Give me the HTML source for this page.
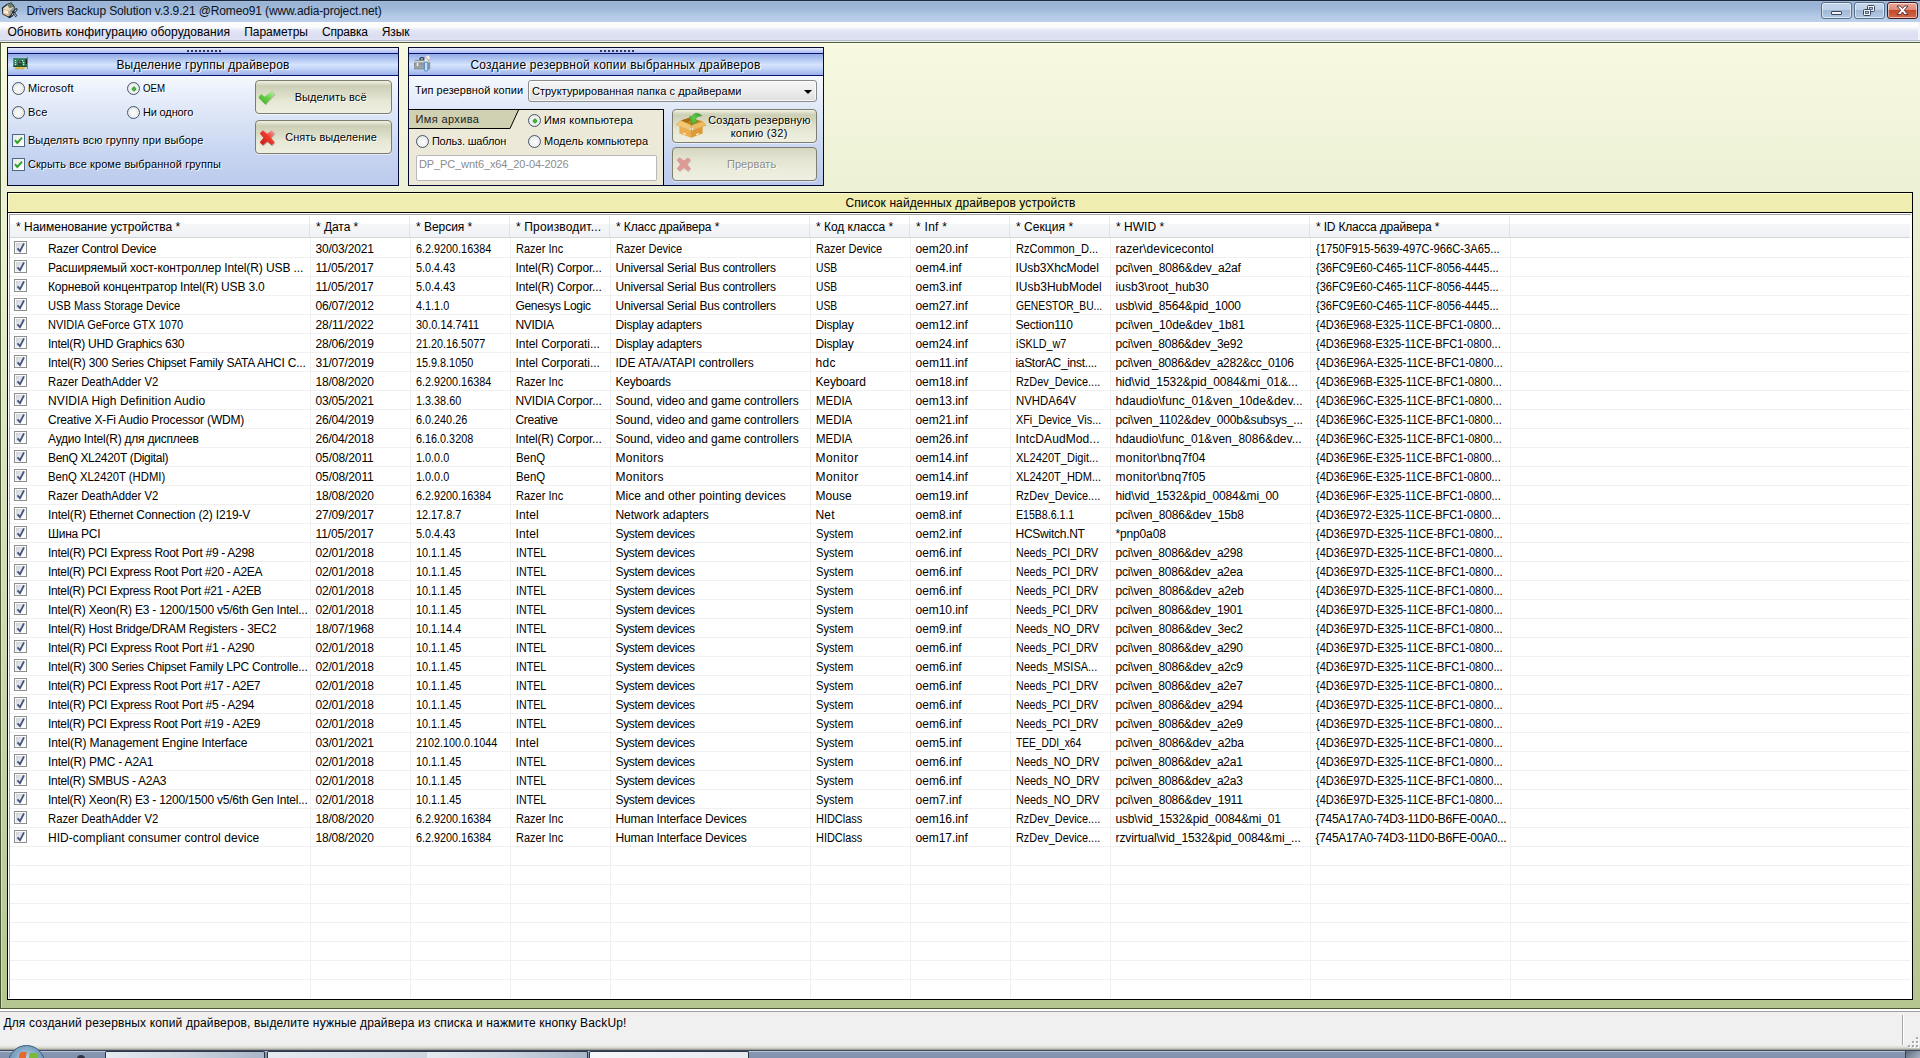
<!DOCTYPE html>
<html lang="ru"><head><meta charset="utf-8"><title>Drivers Backup Solution</title>
<style>
html,body{margin:0;padding:0}
body{width:1920px;height:1058px;overflow:hidden;position:relative;background:#f0f0f0;font-family:"Liberation Sans",sans-serif;font-size:12px;color:#000}
div{position:absolute;box-sizing:border-box}
.t{white-space:pre;font-size:12px}
.a{white-space:pre;text-shadow:1px 1px 0 #fff}
#title{left:0;top:0;width:1920px;height:22px;background:linear-gradient(#1c2a3f 0,#1c2a3f 1px,#a3b9d8 1px,#99b3d4 3px,#a2bbdb 10px,#b1c8e5 15px,#bdd0ea 22px)}
#menu{left:0;top:22px;width:1920px;height:18px;background:linear-gradient(#fdfdfe 0,#fbfbfd 5px,#eceef8 7px,#e2e5f4 9px,#dbdef0 14px,#dfe2f3 18px);border-right:2px solid #f4f5fb}
#menuline{left:0;top:40px;width:1920px;height:3px;background:linear-gradient(#b6bac6 0,#b6bac6 1px,#eaf0f0 1px,#eaf0f0 2px,#4b5a40 2px,#4b5a40 3px)}
#bodybg{left:0;top:43px;width:1920px;height:966px;background:linear-gradient(#f7f9e1,#b4c58f);border-left:1px solid #465631;box-shadow:inset 1px 0 0 rgba(255,255,255,.4),inset 0 1px 0 #fdffec}
.wb{top:2px;height:17px;width:31px;border:1px solid #5a6f8c;border-radius:3px;background:linear-gradient(#c3d6ec 0,#bdd0e7 45%,#a0b7d3 46%,#b5cae3 100%);box-shadow:inset 0 0 0 1px rgba(255,255,255,.55)}
.panel{border:1px solid #050a34;background:linear-gradient(#f4f8fe 0,#f4f8fe 29px,#e3ebf9 55px,#c8d5f1 105px,#bbcaed 100%)}
.pstrip{left:0;top:0;right:0;height:5px;background:linear-gradient(#e9effd 0,#c9d4f8 45%,#acb9f8 100%)}
.phead{left:0;right:0;top:5px;height:23px;border-top:1px solid #0c1668;border-bottom:1px solid #0c1668;background:linear-gradient(#93abe6 0,#b1c6f1 25%,#d5e3fc 50%,#c3d5f8 70%,#9bb1ea 100%)}
.grip{top:1px;height:2px;width:35px;background:repeating-linear-gradient(90deg,#30375e 0,#30375e 2px,transparent 2px,transparent 4px)}
.btn{border:1px solid #7d7e70;border-radius:4px;background:linear-gradient(#f3f3e6 0,#e2e3cf 2px,#cdceb5 5px,#d6d7c0 10px,#e6e7d5 20px,#eeefdf 32px);box-shadow:0 1px 0 rgba(255,255,255,.5)}
.radio{width:13px;height:13px;border-radius:50%;border:1px solid #44566e;background:radial-gradient(circle at 50% 55%,#fdfdfd 0,#f2f2f2 45%,#d8d8d8 100%)}
.radio.on::after{content:"";position:absolute;left:3.5px;top:3.5px;width:4px;height:4px;border-radius:1.2px;transform:rotate(45deg);background:radial-gradient(#5cc452,#23871f);box-shadow:0 0 1.5px #8fd888}
.chk{width:13px;height:13px;border:1px solid #4a6a8c;background:linear-gradient(135deg,#e8e8e4,#fff)}
#ltitle{left:7px;top:192px;width:1906px;height:21px;border:1px solid #000;background:#f0edb0;box-shadow:inset 1px 1px 0 #fcfcd2;text-align:center;line-height:19px;font-size:12px}
#list{left:7px;top:212px;width:1906px;height:788px;border:1px solid #000;background:#fff}
#lv{left:1px;top:1px;width:1902px;height:784px;border-left:1px solid #a5a5a5;border-top:1px solid #a5a5a5;overflow:hidden}
#lv>div{margin:-1px 0 0 -1px}
#hdr{left:1px;top:1px;width:1900px;height:23px;background:linear-gradient(#fff 0,#fff 40%,#f5f6f8 41%,#f1f2f5 100%);border-bottom:1px solid #d5d5d5}
.hs{top:2px;width:1px;height:21px;background:linear-gradient(#ededed,#dcdcdc)}
.vs{top:24px;width:1px;height:760px;background:#f0f0f0}
.rs{left:1px;width:1900px;height:1px;background:#f0f0f0}
.cb{left:5px;width:13px;height:13px;border:1px solid #8e8f8f;background:linear-gradient(135deg,#c4c9cf 0,#e4e6e9 45%,#fff 80%);box-shadow:inset 0 0 0 1px #fbfbfb}
.cb svg{position:absolute;left:-1px;top:-1px}
#status{left:0;top:1009px;width:1920px;height:41px;background:linear-gradient(#fff 0,#fff 2px,#a0a0a0 2px,#a0a0a0 3px,#f0f0f0 3px,#f0f0f0 36px,#d6d6ce 39px,#8e8e88 41px)}
#task{left:0;top:1050px;width:1920px;height:8px;background:linear-gradient(#3b475a 0,#3b475a 1px,#b5c5dc 1px,#b5c5dc 2px,#8797b2 2px,#8192ae 8px)}
.tb{top:1px;height:7px;border:1px solid #2e3644;border-bottom:0;border-radius:2px 2px 0 0;background:linear-gradient(90deg,#e6ebf1 0,#d3dae4 40%,#a9b6c9 100%)}

</style></head>
<body>
<div id="title">
<svg style="position:absolute;left:1px;top:2px" width="19" height="18" viewBox="1 2 19 18"><path d="M2.500 8L7 4.500 11 3l3 3.500V13l-4 4.500L3 14z" fill="#e9dcc6" stroke="#1e2b30" stroke-width="1.300"/><path d="M7 4.500L11 3l3 3.500-4.500 2z" fill="#6f7f6c"/><path d="M3 9l6.500 1.500V17L3 14z" fill="#d9b48f"/><path d="M4 10l4 1v3l-4-1z" fill="#f6efe4"/><path d="M9.500 10.500L14 7v6l-4.500 4.500z" fill="#8d9a8a"/><path d="M11 16.500L17 8.500" stroke="#1f2c3a" stroke-width="2.400"/><path d="M11.600 15.600L16.400 9.300" stroke="#dfe6ee" stroke-width=".9"/><path d="M12.500 11l4 5.500" stroke="#1f2c3a" stroke-width="2.200"/><path d="M14 13.200l2.200 3" stroke="#e8edf2" stroke-width=".9"/><path d="M8.500 17.500l3-2" stroke="#1f2c3a" stroke-width="1.600"/></svg>
<div class="t" id="ttl" style="left:26.4px;letter-spacing:-0.129px;top:2px;height:18px;line-height:18px;color:#0b1220">Drivers Backup Solution v.3.9.21 @Romeo91 (www.adia-project.net)</div>
<div class="wb" style="left:1821px"><div style="left:9px;top:8px;width:11px;height:4px;border:1px solid #37465c;border-radius:1px;background:#f2f4f7"></div></div>
<div class="wb" style="left:1854px"><svg style="position:absolute;left:8px;top:2px" width="13" height="12" viewBox="0 0 13 12"><rect x="4.5" y=".5" width="7" height="6" rx="1" fill="#f4f6f9" stroke="#37465c"/><rect x="6.5" y="2.5" width="3" height="2" fill="#b8c9df" stroke="#37465c" stroke-width=".8"/><rect x=".5" y="4.5" width="7" height="6" rx="1" fill="#f4f6f9" stroke="#37465c"/><rect x="2.5" y="6.5" width="3" height="2" fill="#b8c9df" stroke="#37465c" stroke-width=".8"/></svg></div>
<div class="wb" style="left:1887px;border-color:#431a1c;background:linear-gradient(#e9a99a 0,#dd8a78 45%,#c4472a 46%,#d2694b 100%)"><svg style="position:absolute;left:8px;top:2px" width="13" height="11" viewBox="1896 5 13 11"><path d="M1897 6h3.500l2 2.500 2-2.500h3.500l-3.700 4.300 3.700 4.300h-3.500l-2-2.600-2 2.600h-3.500l3.700-4.300z" fill="#fff" stroke="#4a2a28" stroke-width=".9" stroke-linejoin="round"/></svg></div>
</div>
<div id="menu">
<div class="t" id="m1" style="left:7.4px;letter-spacing:0.041px;top:1px;height:19px;line-height:19px">Обновить конфигурацию оборудования</div>
<div class="t" id="m2" style="left:244.2px;letter-spacing:-0.03px;top:1px;height:19px;line-height:19px">Параметры</div>
<div class="t" id="m3" style="left:322.1px;letter-spacing:-0.197px;top:1px;height:19px;line-height:19px">Справка</div>
<div class="t" id="m4" style="left:381.7px;letter-spacing:-0.062px;top:1px;height:19px;line-height:19px">Язык</div>
</div>
<div id="menuline"></div>
<div id="bodybg"></div>

<div class="panel" id="p1" style="left:7px;top:47px;width:392px;height:139px">
 <div class="pstrip"><div class="grip" style="left:179px;top:2px"></div></div>
 <div class="phead"></div>
 <svg style="position:absolute;left:5px;top:9px" width="16" height="14" viewBox="13 57 16 14"><rect x="13.300" y="58.200" width="13.700" height="8.600" fill="#2f7d5b"/><rect x="13.300" y="58.200" width="13.700" height="1" fill="#3c8a68"/><rect x="13.300" y="65.600" width="13.700" height="1.400" fill="#1f4d2c"/><rect x="18" y="61" width="4" height="4" fill="#2b3d35"/><rect x="18.500" y="61.600" width="3" height="1.600" fill="#66756c"/><g fill="#d7efe0"><rect x="15" y="60" width="1.200" height="1.200"/><rect x="15" y="62" width="1.200" height="1.200"/><rect x="15" y="64" width="1.200" height="1.200"/><rect x="22" y="60" width="1.200" height="1.200"/><rect x="23" y="62" width="1.200" height="1.200"/><rect x="23" y="64" width="1.200" height="1.200"/></g><rect x="25.600" y="59" width="1.400" height="5" fill="#16261d"/><rect x="27" y="57" width="1" height="12" fill="#5a6c8c" opacity=".8"/><rect x="15" y="67" width="10.500" height="1.600" fill="#e4c84a"/><rect x="15" y="68.400" width="9" height=".8" fill="#b99a2c"/></svg>
 <div class="a" style="left:108.4px;letter-spacing:0.181px;top:8px;height:18px;line-height:18px;font-size:12px">Выделение группы драйверов</div>
 <div class="radio" style="left:4px;top:34px"></div><div class="a" style="left:19.9px;letter-spacing:0.119px;top:32px;height:16px;line-height:16px;font-size:11px">Microsoft</div>
 <div class="radio on" style="left:119px;top:34px"></div><div class="a" style="left:134.9px;transform:scaleX(0.8818);transform-origin:0 50%;top:32px;height:16px;line-height:16px;font-size:11px">OEM</div>
 <div class="radio" style="left:4px;top:58px"></div><div class="a" style="left:19.9px;letter-spacing:0.244px;top:56px;height:16px;line-height:16px;font-size:11px">Все</div>
 <div class="radio" style="left:119px;top:58px"></div><div class="a" style="left:134.9px;letter-spacing:-0.137px;top:56px;height:16px;line-height:16px;font-size:11px">Ни одного</div>
 <div class="chk" style="left:4px;top:86px"><svg width="11" height="11" viewBox="0 0 11 11" style="position:absolute;left:0;top:0"><path d="M2 5.2L4.3 8 9 2.6" fill="none" stroke="#2ea22a" stroke-width="2"/></svg></div>
 <div class="a" style="left:19.9px;letter-spacing:0.13px;top:84px;height:16px;line-height:16px;font-size:11px">Выделять всю группу при выборе</div>
 <div class="chk" style="left:4px;top:110px"><svg width="11" height="11" viewBox="0 0 11 11" style="position:absolute;left:0;top:0"><path d="M2 5.2L4.3 8 9 2.6" fill="none" stroke="#2ea22a" stroke-width="2"/></svg></div>
 <div class="a" style="left:19.9px;letter-spacing:0.101px;top:108px;height:16px;line-height:16px;font-size:11px">Скрыть все кроме выбранной группы</div>
 <div class="btn" style="left:247px;top:32px;width:137px;height:34px">
  <svg style="position:absolute;left:2px;top:9px" width="18" height="16" viewBox="258 90 18 16"><defs><linearGradient id="gck" x1="0" y1="1" x2="1" y2="0"><stop offset="0" stop-color="#3fa92a"/><stop offset=".5" stop-color="#62cf45"/><stop offset="1" stop-color="#c4efb4"/></linearGradient></defs><path d="M259.200 98.300L262 95l3.400 2.800 6.600-6.600 3.500 3.400-9.600 10.600z" fill="#8c8f78" opacity=".55"/><path d="M258.400 97.400L261 94l3.700 2.800 6.900-5.800 3.100 3.300-9.400 10.300z" fill="url(#gck)"/></svg>
  <div class="a" style="left:38.7px;letter-spacing:0.063px;top:8px;height:16px;line-height:16px;font-size:11px">Выделить всё</div>
 </div>
 <div class="btn" style="left:247px;top:72px;width:137px;height:34px">
  <svg style="position:absolute;left:3px;top:8px" width="17" height="18" viewBox="259 129 17 18"><defs><linearGradient id="gx" x1="0" y1="1" x2="1" y2="0"><stop offset="0" stop-color="#c81414"/><stop offset=".55" stop-color="#ea3a2c"/><stop offset="1" stop-color="#f6b4b4"/></linearGradient></defs><path d="M262.800 130.200l4.500 3.600 4.400-3.600 3 3-3.700 4.500 3.700 4.500-3 3-4.400-3.700-4.500 3.700-3-3 3.700-4.500-3.700-4.500z" transform="translate(.6 1)" fill="#8e8e7c" opacity=".6"/><path d="M262.800 130.200l4.500 3.600 4.400-3.600 3 3-3.700 4.500 3.700 4.500-3 3-4.400-3.700-4.500 3.700-3-3 3.700-4.500-3.700-4.500z" fill="url(#gx)"/></svg>
  <div class="a" style="left:29.15px;letter-spacing:0.073px;top:8px;height:16px;line-height:16px;font-size:11px">Снять выделение</div>
 </div>
</div>

<div class="panel" id="p2" style="left:408px;top:47px;width:416px;height:139px">
 <div class="pstrip"><div class="grip" style="left:191px;top:2px"></div></div>
 <div class="phead"></div>
 <svg style="position:absolute;left:5px;top:7px" width="18" height="18" viewBox="414 55 18 18"><rect x="420" y="57.800" width="4" height="2.500" rx="1" fill="none" stroke="#1d2228" stroke-width="1.100"/><path d="M414.300 62l1.200-1.700h13l1.300 1.700v7h-15.500z" fill="#9aa1a6" stroke="#70787e" stroke-width=".6"/><rect x="414.300" y="61" width="15.500" height="1.300" fill="#d4d9dd"/><rect x="414.300" y="63.500" width="15.500" height=".8" fill="#7d858a"/><rect x="416.700" y="63" width="1.600" height="3" fill="#f2f2f2"/><path d="M424.300 62l1-5.500 3.700-1.200 1.200 3-3.600 4z" fill="#f1f1f1" stroke="#b9b9c2" stroke-width=".5"/><path d="M425.500 57.200l3 3" stroke="#c25a64" stroke-width=".7"/><rect x="424.300" y="62" width="3.600" height="9" rx="1.600" fill="#bfe0fa" stroke="#3f78b8" stroke-width=".9"/></svg>
 <div class="a" style="left:61.4px;letter-spacing:0.223px;top:8px;height:18px;line-height:18px;font-size:12px">Создание резервной копии выбранных драйверов</div>
 <div class="a" style="left:5.9px;letter-spacing:0.059px;top:34px;height:16px;line-height:16px;font-size:11px">Тип резервной копии</div>
 <div id="combo" style="left:119px;top:32px;width:289px;height:22px;border:1px solid #8b8b8b;border-radius:3px;background:linear-gradient(#f6f6f6 0,#ececec 50%,#dedede 100%);box-shadow:inset 0 0 0 1px rgba(255,255,255,.7)">
  <div class="a" style="left:2.9px;letter-spacing:0.076px;top:2px;height:16px;line-height:16px;font-size:11px">Структурированная папка с драйверами</div>
  <div style="right:4px;top:9px;width:0;height:0;border-left:4px solid transparent;border-right:4px solid transparent;border-top:4px solid #000"></div>
 </div>
 <div id="arch" style="left:0;top:61px;width:255px;height:76px;background:#ece9d8;border-top:1px solid #000;border-right:1px solid #000">
  <svg style="position:absolute;left:0;top:0" width="112" height="20" viewBox="0 0 112 20"><path d="M0 0H109.5L101 18.5H0z" fill="#d0d0b2"/><path d="M109.5 0L101 18.5H0" fill="none" stroke="#000" stroke-width="1"/></svg>
  <div class="t" style="left:6.4px;letter-spacing:0.387px;top:1px;height:16px;line-height:16px;font-size:11px;color:#1c1c1c">Имя архива</div>
  <div class="radio on" style="left:119px;top:4px"></div><div class="a" style="left:134.9px;letter-spacing:0.224px;top:2px;height:16px;line-height:16px;font-size:11px">Имя компьютера</div>
  <div class="radio" style="left:7px;top:25px"></div><div class="a" style="left:22.9px;letter-spacing:-0.183px;top:23px;height:16px;line-height:16px;font-size:11px">Польз. шаблон</div>
  <div class="radio" style="left:119px;top:25px"></div><div class="a" style="left:134.9px;letter-spacing:0.004px;top:23px;height:16px;line-height:16px;font-size:11px">Модель компьютера</div>
  <div style="left:7px;top:45px;width:241px;height:26px;border:1px solid #b9b9b9;border-radius:2px;background:#fff">
   <div class="t" style="left:1.9px;letter-spacing:-0.103px;top:0px;height:16px;line-height:16px;font-size:11px;color:#8c8c8c">DP_PC_wnt6_x64_20-04-2026</div>
  </div>
 </div>
 <div class="btn" style="left:263px;top:61px;width:145px;height:34px">
  <svg style="position:absolute;left:2px;top:2px" width="33" height="27" viewBox="675 112 33 27"><path d="M681 120.500L690 117.400 702.800 121.400 691.300 125.500z" fill="#c4841e"/><path d="M681 120.500L690 117.400 690 121 685 123z" fill="#a86c12"/><path d="M679.400 126.500L691.300 130.500V137.800L679.400 133.600z" fill="#eaae50"/><path d="M691.300 130.500L702.600 126.500V133.500L691.300 137.800z" fill="#dc9a3a"/><path d="M676.200 124.600L681 120.500 691.300 125.500 688.400 129.800z" fill="#f4c873" stroke="#d39a3c" stroke-width=".5"/><path d="M691.300 125.500L702.800 121.400 706 125.400 694.500 129.400z" fill="#f0bc62" stroke="#d39a3c" stroke-width=".5"/><path d="M683 132.500l3 1v1.600l-3-1zM696 134l3-1.100v1.600l-3 1.100z" fill="#fce6b0"/><path d="M691.300 125.500V137.800" stroke="#c98b2c" stroke-width=".6"/><defs><linearGradient id="gar" x1="1" y1="0" x2="0" y2="1"><stop offset="0" stop-color="#2f9a2a"/><stop offset=".5" stop-color="#5ecb45"/><stop offset="1" stop-color="#3ead30"/></linearGradient></defs><path d="M701.800 115.800C698.500 112.200 693.500 112.400 692.200 116.600L689.800 116 691.600 124.500 697.400 121.600 695.400 120C695.800 117.600 698 116 701.800 115.800z" fill="url(#gar)" stroke="#2c8a28" stroke-width=".4"/></svg>
  <div class="a" style="left:35.15px;letter-spacing:0.163px;top:4px;height:13px;line-height:13px;font-size:11px">Создать резервную</div>
  <div class="a" style="left:57.65px;letter-spacing:0.292px;top:17px;height:13px;line-height:13px;font-size:11px">копию (32)</div>
 </div>
 <div class="btn" style="left:263px;top:99px;width:145px;height:34px;background:linear-gradient(#d6d7c2 0,#e1e2cf 30%,#ebecdb 70%,#eeefe0 100%)">
  <svg style="position:absolute;left:3px;top:8px" width="16" height="17" viewBox="259 129 17 18"><path d="M262.800 130.200l4.500 3.600 4.400-3.600 3 3-3.700 4.500 3.700 4.500-3 3-4.400-3.700-4.500 3.700-3-3 3.700-4.500-3.700-4.500z" transform="translate(.6 1)" fill="#b9b9a8" opacity=".6"/><path d="M262.800 130.200l4.500 3.600 4.400-3.600 3 3-3.700 4.500 3.700 4.500-3 3-4.400-3.700-4.500 3.700-3-3 3.700-4.500-3.700-4.500z" fill="#dd9a96"/></svg>
  <div class="a" style="left:53.9px;letter-spacing:0.103px;top:8px;height:16px;line-height:16px;font-size:11px;color:#8d8d85">Прервать</div>
 </div>
</div>

<div id="ltitle"><div class="t" style="left:837.4px;letter-spacing:0.104px;top:1px;height:19px;line-height:19px">Список найденных драйверов устройств</div></div>
<div id="list">
<div id="lv">
<div id="hdr"></div>
<div class="t" style="left:7px;top:2px;height:22px;line-height:22px;letter-spacing:-0.006px">* Наименование устройства *</div>
<div class="t" style="left:307px;top:2px;height:22px;line-height:22px;letter-spacing:-0.049px">* Дата *</div>
<div class="t" style="left:407px;top:2px;height:22px;line-height:22px;letter-spacing:-0.036px">* Версия *</div>
<div class="t" style="left:507px;top:2px;height:22px;line-height:22px;letter-spacing:0.165px">* Производит...</div>
<div class="t" style="left:607px;top:2px;height:22px;line-height:22px;letter-spacing:-0.118px">* Класс драйвера *</div>
<div class="t" style="left:807px;top:2px;height:22px;line-height:22px;letter-spacing:-0.02px">* Код класса *</div>
<div class="t" style="left:907px;top:2px;height:22px;line-height:22px;letter-spacing:0.263px">* Inf *</div>
<div class="t" style="left:1007px;top:2px;height:22px;line-height:22px;letter-spacing:0.053px">* Секция *</div>
<div class="t" style="left:1107px;top:2px;height:22px;line-height:22px;letter-spacing:0.025px">* HWID *</div>
<div class="t" style="left:1307px;top:2px;height:22px;line-height:22px;letter-spacing:-0.188px">* ID Класса драйвера *</div>
<div class="hs" style="left:300px"></div><div class="hs" style="left:400px"></div><div class="hs" style="left:500px"></div><div class="hs" style="left:600px"></div><div class="hs" style="left:800px"></div><div class="hs" style="left:900px"></div><div class="hs" style="left:1000px"></div><div class="hs" style="left:1100px"></div><div class="hs" style="left:1300px"></div><div class="hs" style="left:1500px"></div>
<div class="vs" style="left:301px"></div><div class="vs" style="left:401px"></div><div class="vs" style="left:501px"></div><div class="vs" style="left:601px"></div><div class="vs" style="left:801px"></div><div class="vs" style="left:901px"></div><div class="vs" style="left:1001px"></div><div class="vs" style="left:1101px"></div><div class="vs" style="left:1301px"></div><div class="vs" style="left:1501px"></div>
<div class="rs" style="top:43px"></div><div class="rs" style="top:62px"></div><div class="rs" style="top:81px"></div><div class="rs" style="top:100px"></div><div class="rs" style="top:119px"></div><div class="rs" style="top:138px"></div><div class="rs" style="top:157px"></div><div class="rs" style="top:176px"></div><div class="rs" style="top:195px"></div><div class="rs" style="top:214px"></div><div class="rs" style="top:233px"></div><div class="rs" style="top:252px"></div><div class="rs" style="top:271px"></div><div class="rs" style="top:290px"></div><div class="rs" style="top:309px"></div><div class="rs" style="top:328px"></div><div class="rs" style="top:347px"></div><div class="rs" style="top:366px"></div><div class="rs" style="top:385px"></div><div class="rs" style="top:404px"></div><div class="rs" style="top:423px"></div><div class="rs" style="top:442px"></div><div class="rs" style="top:461px"></div><div class="rs" style="top:480px"></div><div class="rs" style="top:499px"></div><div class="rs" style="top:518px"></div><div class="rs" style="top:537px"></div><div class="rs" style="top:556px"></div><div class="rs" style="top:575px"></div><div class="rs" style="top:594px"></div><div class="rs" style="top:613px"></div><div class="rs" style="top:632px"></div><div class="rs" style="top:651px"></div><div class="rs" style="top:670px"></div><div class="rs" style="top:689px"></div><div class="rs" style="top:708px"></div><div class="rs" style="top:727px"></div><div class="rs" style="top:746px"></div><div class="rs" style="top:765px"></div>
<div class="cb" style="top:27px"><svg width="13" height="13" viewBox="0 0 13 13"><path d="M3.5 7.3L6 10.2 10 2.4" fill="none" stroke="#42527f" stroke-width="1.8"/></svg></div><div class="t" style="left:39px;top:26px;height:19px;line-height:19px;letter-spacing:-0.292px">Razer Control Device</div><div class="t" style="left:306.5px;top:26px;height:19px;line-height:19px;letter-spacing:-0.186px">30/03/2021</div><div class="t" style="left:406.5px;top:26px;height:19px;line-height:19px;transform:scaleX(0.9014);transform-origin:0 50%">6.2.9200.16384</div><div class="t" style="left:506.5px;top:26px;height:19px;line-height:19px;transform:scaleX(0.919);transform-origin:0 50%">Razer Inc</div><div class="t" style="left:606.5px;top:26px;height:19px;line-height:19px;transform:scaleX(0.919);transform-origin:0 50%">Razer Device</div><div class="t" style="left:806.5px;top:26px;height:19px;line-height:19px;transform:scaleX(0.919);transform-origin:0 50%">Razer Device</div><div class="t" style="left:906.5px;top:26px;height:19px;line-height:19px;letter-spacing:-0.056px">oem20.inf</div><div class="t" style="left:1006.5px;top:26px;height:19px;line-height:19px;transform:scaleX(0.9268);transform-origin:0 50%">RzCommon_D...</div><div class="t" style="left:1106.5px;top:26px;height:19px;line-height:19px;letter-spacing:0.045px">razer\devicecontol</div><div class="t" style="left:1306.5px;top:26px;height:19px;line-height:19px;transform:scaleX(0.9366);transform-origin:0 50%">{1750F915-5639-497C-966C-3A65...</div>
<div class="cb" style="top:46px"><svg width="13" height="13" viewBox="0 0 13 13"><path d="M3.5 7.3L6 10.2 10 2.4" fill="none" stroke="#42527f" stroke-width="1.8"/></svg></div><div class="t" style="left:39px;top:45px;height:19px;line-height:19px;letter-spacing:-0.107px">Расширяемый хост-контроллер Intel(R) USB ...</div><div class="t" style="left:306.5px;top:45px;height:19px;line-height:19px;letter-spacing:-0.097px">11/05/2017</div><div class="t" style="left:406.5px;top:45px;height:19px;line-height:19px;transform:scaleX(0.9037);transform-origin:0 50%">5.0.4.43</div><div class="t" style="left:506.5px;top:45px;height:19px;line-height:19px;letter-spacing:-0.139px">Intel(R) Corpor...</div><div class="t" style="left:606.5px;top:45px;height:19px;line-height:19px;letter-spacing:-0.204px">Universal Serial Bus controllers</div><div class="t" style="left:806.5px;top:45px;height:19px;line-height:19px;transform:scaleX(0.8587);transform-origin:0 50%">USB</div><div class="t" style="left:906.5px;top:45px;height:19px;line-height:19px;letter-spacing:0.021px">oem4.inf</div><div class="t" style="left:1006.5px;top:45px;height:19px;line-height:19px;letter-spacing:-0.117px">IUsb3XhcModel</div><div class="t" style="left:1106.5px;top:45px;height:19px;line-height:19px;letter-spacing:-0.171px">pci\ven_8086&amp;dev_a2af</div><div class="t" style="left:1306.5px;top:45px;height:19px;line-height:19px;transform:scaleX(0.9232);transform-origin:0 50%">{36FC9E60-C465-11CF-8056-4445...</div>
<div class="cb" style="top:65px"><svg width="13" height="13" viewBox="0 0 13 13"><path d="M3.5 7.3L6 10.2 10 2.4" fill="none" stroke="#42527f" stroke-width="1.8"/></svg></div><div class="t" style="left:39px;top:64px;height:19px;line-height:19px;letter-spacing:-0.177px">Корневой концентратор Intel(R) USB 3.0</div><div class="t" style="left:306.5px;top:64px;height:19px;line-height:19px;letter-spacing:-0.097px">11/05/2017</div><div class="t" style="left:406.5px;top:64px;height:19px;line-height:19px;transform:scaleX(0.9037);transform-origin:0 50%">5.0.4.43</div><div class="t" style="left:506.5px;top:64px;height:19px;line-height:19px;letter-spacing:-0.139px">Intel(R) Corpor...</div><div class="t" style="left:606.5px;top:64px;height:19px;line-height:19px;letter-spacing:-0.204px">Universal Serial Bus controllers</div><div class="t" style="left:806.5px;top:64px;height:19px;line-height:19px;transform:scaleX(0.8587);transform-origin:0 50%">USB</div><div class="t" style="left:906.5px;top:64px;height:19px;line-height:19px;letter-spacing:0.021px">oem3.inf</div><div class="t" style="left:1006.5px;top:64px;height:19px;line-height:19px;letter-spacing:0.012px">IUsb3HubModel</div><div class="t" style="left:1106.5px;top:64px;height:19px;line-height:19px;letter-spacing:0.028px">iusb3\root_hub30</div><div class="t" style="left:1306.5px;top:64px;height:19px;line-height:19px;transform:scaleX(0.9232);transform-origin:0 50%">{36FC9E60-C465-11CF-8056-4445...</div>
<div class="cb" style="top:84px"><svg width="13" height="13" viewBox="0 0 13 13"><path d="M3.5 7.3L6 10.2 10 2.4" fill="none" stroke="#42527f" stroke-width="1.8"/></svg></div><div class="t" style="left:39px;top:83px;height:19px;line-height:19px;transform:scaleX(0.9306);transform-origin:0 50%">USB Mass Storage Device</div><div class="t" style="left:306.5px;top:83px;height:19px;line-height:19px;letter-spacing:-0.186px">06/07/2012</div><div class="t" style="left:406.5px;top:83px;height:19px;line-height:19px;transform:scaleX(0.9046);transform-origin:0 50%">4.1.1.0</div><div class="t" style="left:506.5px;top:83px;height:19px;line-height:19px;letter-spacing:-0.322px">Genesys Logic</div><div class="t" style="left:606.5px;top:83px;height:19px;line-height:19px;letter-spacing:-0.204px">Universal Serial Bus controllers</div><div class="t" style="left:806.5px;top:83px;height:19px;line-height:19px;transform:scaleX(0.8587);transform-origin:0 50%">USB</div><div class="t" style="left:906.5px;top:83px;height:19px;line-height:19px;letter-spacing:-0.056px">oem27.inf</div><div class="t" style="left:1006.5px;top:83px;height:19px;line-height:19px;transform:scaleX(0.8578);transform-origin:0 50%">GENESTOR_BU...</div><div class="t" style="left:1106.5px;top:83px;height:19px;line-height:19px;letter-spacing:-0.171px">usb\vid_8564&amp;pid_1000</div><div class="t" style="left:1306.5px;top:83px;height:19px;line-height:19px;transform:scaleX(0.9232);transform-origin:0 50%">{36FC9E60-C465-11CF-8056-4445...</div>
<div class="cb" style="top:103px"><svg width="13" height="13" viewBox="0 0 13 13"><path d="M3.5 7.3L6 10.2 10 2.4" fill="none" stroke="#42527f" stroke-width="1.8"/></svg></div><div class="t" style="left:39px;top:102px;height:19px;line-height:19px;transform:scaleX(0.9172);transform-origin:0 50%">NVIDIA GeForce GTX 1070</div><div class="t" style="left:306.5px;top:102px;height:19px;line-height:19px;letter-spacing:-0.097px">28/11/2022</div><div class="t" style="left:406.5px;top:102px;height:19px;line-height:19px;transform:scaleX(0.9135);transform-origin:0 50%">30.0.14.7411</div><div class="t" style="left:506.5px;top:102px;height:19px;line-height:19px;letter-spacing:-0.303px">NVIDIA</div><div class="t" style="left:606.5px;top:102px;height:19px;line-height:19px;letter-spacing:-0.199px">Display adapters</div><div class="t" style="left:806.5px;top:102px;height:19px;line-height:19px;letter-spacing:-0.166px">Display</div><div class="t" style="left:906.5px;top:102px;height:19px;line-height:19px;letter-spacing:-0.056px">oem12.inf</div><div class="t" style="left:1006.5px;top:102px;height:19px;line-height:19px;letter-spacing:-0.196px">Section110</div><div class="t" style="left:1106.5px;top:102px;height:19px;line-height:19px;letter-spacing:-0.139px">pci\ven_10de&amp;dev_1b81</div><div class="t" style="left:1306.5px;top:102px;height:19px;line-height:19px;transform:scaleX(0.9178);transform-origin:0 50%">{4D36E968-E325-11CE-BFC1-0800...</div>
<div class="cb" style="top:122px"><svg width="13" height="13" viewBox="0 0 13 13"><path d="M3.5 7.3L6 10.2 10 2.4" fill="none" stroke="#42527f" stroke-width="1.8"/></svg></div><div class="t" style="left:39px;top:121px;height:19px;line-height:19px;letter-spacing:-0.288px">Intel(R) UHD Graphics 630</div><div class="t" style="left:306.5px;top:121px;height:19px;line-height:19px;letter-spacing:-0.186px">28/06/2019</div><div class="t" style="left:406.5px;top:121px;height:19px;line-height:19px;transform:scaleX(0.9016);transform-origin:0 50%">21.20.16.5077</div><div class="t" style="left:506.5px;top:121px;height:19px;line-height:19px;letter-spacing:-0.065px">Intel Corporati...</div><div class="t" style="left:606.5px;top:121px;height:19px;line-height:19px;letter-spacing:-0.199px">Display adapters</div><div class="t" style="left:806.5px;top:121px;height:19px;line-height:19px;letter-spacing:-0.166px">Display</div><div class="t" style="left:906.5px;top:121px;height:19px;line-height:19px;letter-spacing:-0.056px">oem24.inf</div><div class="t" style="left:1006.5px;top:121px;height:19px;line-height:19px;transform:scaleX(0.8959);transform-origin:0 50%">iSKLD_w7</div><div class="t" style="left:1106.5px;top:121px;height:19px;line-height:19px;letter-spacing:-0.235px">pci\ven_8086&amp;dev_3e92</div><div class="t" style="left:1306.5px;top:121px;height:19px;line-height:19px;transform:scaleX(0.9178);transform-origin:0 50%">{4D36E968-E325-11CE-BFC1-0800...</div>
<div class="cb" style="top:141px"><svg width="13" height="13" viewBox="0 0 13 13"><path d="M3.5 7.3L6 10.2 10 2.4" fill="none" stroke="#42527f" stroke-width="1.8"/></svg></div><div class="t" style="left:39px;top:140px;height:19px;line-height:19px;letter-spacing:-0.219px">Intel(R) 300 Series Chipset Family SATA AHCI C...</div><div class="t" style="left:306.5px;top:140px;height:19px;line-height:19px;letter-spacing:-0.186px">31/07/2019</div><div class="t" style="left:406.5px;top:140px;height:19px;line-height:19px;transform:scaleX(0.9021);transform-origin:0 50%">15.9.8.1050</div><div class="t" style="left:506.5px;top:140px;height:19px;line-height:19px;letter-spacing:-0.065px">Intel Corporati...</div><div class="t" style="left:606.5px;top:140px;height:19px;line-height:19px;letter-spacing:-0.038px">IDE ATA/ATAPI controllers</div><div class="t" style="left:806.5px;top:140px;height:19px;line-height:19px;letter-spacing:0.28px">hdc</div><div class="t" style="left:906.5px;top:140px;height:19px;line-height:19px;letter-spacing:0.043px">oem11.inf</div><div class="t" style="left:1006.5px;top:140px;height:19px;line-height:19px;letter-spacing:-0.324px">iaStorAC_inst....</div><div class="t" style="left:1106.5px;top:140px;height:19px;line-height:19px;letter-spacing:-0.251px">pci\ven_8086&amp;dev_a282&amp;cc_0106</div><div class="t" style="left:1306.5px;top:140px;height:19px;line-height:19px;transform:scaleX(0.9217);transform-origin:0 50%">{4D36E96A-E325-11CE-BFC1-0800...</div>
<div class="cb" style="top:160px"><svg width="13" height="13" viewBox="0 0 13 13"><path d="M3.5 7.3L6 10.2 10 2.4" fill="none" stroke="#42527f" stroke-width="1.8"/></svg></div><div class="t" style="left:39px;top:159px;height:19px;line-height:19px;transform:scaleX(0.9386);transform-origin:0 50%">Razer DeathAdder V2</div><div class="t" style="left:306.5px;top:159px;height:19px;line-height:19px;letter-spacing:-0.186px">18/08/2020</div><div class="t" style="left:406.5px;top:159px;height:19px;line-height:19px;transform:scaleX(0.9014);transform-origin:0 50%">6.2.9200.16384</div><div class="t" style="left:506.5px;top:159px;height:19px;line-height:19px;transform:scaleX(0.919);transform-origin:0 50%">Razer Inc</div><div class="t" style="left:606.5px;top:159px;height:19px;line-height:19px;letter-spacing:-0.242px">Keyboards</div><div class="t" style="left:806.5px;top:159px;height:19px;line-height:19px;letter-spacing:-0.147px">Keyboard</div><div class="t" style="left:906.5px;top:159px;height:19px;line-height:19px;letter-spacing:-0.056px">oem18.inf</div><div class="t" style="left:1006.5px;top:159px;height:19px;line-height:19px;transform:scaleX(0.9083);transform-origin:0 50%">RzDev_Device....</div><div class="t" style="left:1106.5px;top:159px;height:19px;line-height:19px;letter-spacing:-0.063px">hid\vid_1532&amp;pid_0084&amp;mi_01&amp;...</div><div class="t" style="left:1306.5px;top:159px;height:19px;line-height:19px;transform:scaleX(0.9168);transform-origin:0 50%">{4D36E96B-E325-11CE-BFC1-0800...</div>
<div class="cb" style="top:179px"><svg width="13" height="13" viewBox="0 0 13 13"><path d="M3.5 7.3L6 10.2 10 2.4" fill="none" stroke="#42527f" stroke-width="1.8"/></svg></div><div class="t" style="left:39px;top:178px;height:19px;line-height:19px;letter-spacing:0.111px">NVIDIA High Definition Audio</div><div class="t" style="left:306.5px;top:178px;height:19px;line-height:19px;letter-spacing:-0.186px">03/05/2021</div><div class="t" style="left:406.5px;top:178px;height:19px;line-height:19px;transform:scaleX(0.9032);transform-origin:0 50%">1.3.38.60</div><div class="t" style="left:506.5px;top:178px;height:19px;line-height:19px;letter-spacing:-0.156px">NVIDIA Corpor...</div><div class="t" style="left:606.5px;top:178px;height:19px;line-height:19px;letter-spacing:-0.068px">Sound, video and game controllers</div><div class="t" style="left:806.5px;top:178px;height:19px;line-height:19px;transform:scaleX(0.9522);transform-origin:0 50%">MEDIA</div><div class="t" style="left:906.5px;top:178px;height:19px;line-height:19px;letter-spacing:-0.056px">oem13.inf</div><div class="t" style="left:1006.5px;top:178px;height:19px;line-height:19px;transform:scaleX(0.9501);transform-origin:0 50%">NVHDA64V</div><div class="t" style="left:1106.5px;top:178px;height:19px;line-height:19px;letter-spacing:0.041px">hdaudio\func_01&amp;ven_10de&amp;dev...</div><div class="t" style="left:1306.5px;top:178px;height:19px;line-height:19px;transform:scaleX(0.9137);transform-origin:0 50%">{4D36E96C-E325-11CE-BFC1-0800...</div>
<div class="cb" style="top:198px"><svg width="13" height="13" viewBox="0 0 13 13"><path d="M3.5 7.3L6 10.2 10 2.4" fill="none" stroke="#42527f" stroke-width="1.8"/></svg></div><div class="t" style="left:39px;top:197px;height:19px;line-height:19px;letter-spacing:-0.167px">Creative X-Fi Audio Processor (WDM)</div><div class="t" style="left:306.5px;top:197px;height:19px;line-height:19px;letter-spacing:-0.186px">26/04/2019</div><div class="t" style="left:406.5px;top:197px;height:19px;line-height:19px;transform:scaleX(0.9027);transform-origin:0 50%">6.0.240.26</div><div class="t" style="left:506.5px;top:197px;height:19px;line-height:19px;letter-spacing:-0.311px">Creative</div><div class="t" style="left:606.5px;top:197px;height:19px;line-height:19px;letter-spacing:-0.068px">Sound, video and game controllers</div><div class="t" style="left:806.5px;top:197px;height:19px;line-height:19px;transform:scaleX(0.9522);transform-origin:0 50%">MEDIA</div><div class="t" style="left:906.5px;top:197px;height:19px;line-height:19px;letter-spacing:-0.056px">oem21.inf</div><div class="t" style="left:1006.5px;top:197px;height:19px;line-height:19px;transform:scaleX(0.9017);transform-origin:0 50%">XFi_Device_Vis...</div><div class="t" style="left:1106.5px;top:197px;height:19px;line-height:19px;letter-spacing:-0.189px">pci\ven_1102&amp;dev_000b&amp;subsys_...</div><div class="t" style="left:1306.5px;top:197px;height:19px;line-height:19px;transform:scaleX(0.9137);transform-origin:0 50%">{4D36E96C-E325-11CE-BFC1-0800...</div>
<div class="cb" style="top:217px"><svg width="13" height="13" viewBox="0 0 13 13"><path d="M3.5 7.3L6 10.2 10 2.4" fill="none" stroke="#42527f" stroke-width="1.8"/></svg></div><div class="t" style="left:39px;top:216px;height:19px;line-height:19px;letter-spacing:-0.223px">Аудио Intel(R) для дисплеев</div><div class="t" style="left:306.5px;top:216px;height:19px;line-height:19px;letter-spacing:-0.186px">26/04/2018</div><div class="t" style="left:406.5px;top:216px;height:19px;line-height:19px;transform:scaleX(0.9021);transform-origin:0 50%">6.16.0.3208</div><div class="t" style="left:506.5px;top:216px;height:19px;line-height:19px;letter-spacing:-0.139px">Intel(R) Corpor...</div><div class="t" style="left:606.5px;top:216px;height:19px;line-height:19px;letter-spacing:-0.068px">Sound, video and game controllers</div><div class="t" style="left:806.5px;top:216px;height:19px;line-height:19px;transform:scaleX(0.9522);transform-origin:0 50%">MEDIA</div><div class="t" style="left:906.5px;top:216px;height:19px;line-height:19px;letter-spacing:-0.056px">oem26.inf</div><div class="t" style="left:1006.5px;top:216px;height:19px;line-height:19px;letter-spacing:0.106px">IntcDAudMod...</div><div class="t" style="left:1106.5px;top:216px;height:19px;line-height:19px;letter-spacing:0.008px">hdaudio\func_01&amp;ven_8086&amp;dev...</div><div class="t" style="left:1306.5px;top:216px;height:19px;line-height:19px;transform:scaleX(0.9137);transform-origin:0 50%">{4D36E96C-E325-11CE-BFC1-0800...</div>
<div class="cb" style="top:236px"><svg width="13" height="13" viewBox="0 0 13 13"><path d="M3.5 7.3L6 10.2 10 2.4" fill="none" stroke="#42527f" stroke-width="1.8"/></svg></div><div class="t" style="left:39px;top:235px;height:19px;line-height:19px;letter-spacing:-0.318px">BenQ XL2420T (Digital)</div><div class="t" style="left:306.5px;top:235px;height:19px;line-height:19px;letter-spacing:-0.097px">05/08/2011</div><div class="t" style="left:406.5px;top:235px;height:19px;line-height:19px;transform:scaleX(0.9046);transform-origin:0 50%">1.0.0.0</div><div class="t" style="left:506.5px;top:235px;height:19px;line-height:19px;transform:scaleX(0.9515);transform-origin:0 50%">BenQ</div><div class="t" style="left:606.5px;top:235px;height:19px;line-height:19px;letter-spacing:0.273px">Monitors</div><div class="t" style="left:806.5px;top:235px;height:19px;line-height:19px;letter-spacing:0.455px">Monitor</div><div class="t" style="left:906.5px;top:235px;height:19px;line-height:19px;letter-spacing:-0.056px">oem14.inf</div><div class="t" style="left:1006.5px;top:235px;height:19px;line-height:19px;transform:scaleX(0.9196);transform-origin:0 50%">XL2420T_Digit...</div><div class="t" style="left:1106.5px;top:235px;height:19px;line-height:19px;letter-spacing:0.231px">monitor\bnq7f04</div><div class="t" style="left:1306.5px;top:235px;height:19px;line-height:19px;transform:scaleX(0.9118);transform-origin:0 50%">{4D36E96E-E325-11CE-BFC1-0800...</div>
<div class="cb" style="top:255px"><svg width="13" height="13" viewBox="0 0 13 13"><path d="M3.5 7.3L6 10.2 10 2.4" fill="none" stroke="#42527f" stroke-width="1.8"/></svg></div><div class="t" style="left:39px;top:254px;height:19px;line-height:19px;transform:scaleX(0.9414);transform-origin:0 50%">BenQ XL2420T (HDMI)</div><div class="t" style="left:306.5px;top:254px;height:19px;line-height:19px;letter-spacing:-0.097px">05/08/2011</div><div class="t" style="left:406.5px;top:254px;height:19px;line-height:19px;transform:scaleX(0.9046);transform-origin:0 50%">1.0.0.0</div><div class="t" style="left:506.5px;top:254px;height:19px;line-height:19px;transform:scaleX(0.9515);transform-origin:0 50%">BenQ</div><div class="t" style="left:606.5px;top:254px;height:19px;line-height:19px;letter-spacing:0.273px">Monitors</div><div class="t" style="left:806.5px;top:254px;height:19px;line-height:19px;letter-spacing:0.455px">Monitor</div><div class="t" style="left:906.5px;top:254px;height:19px;line-height:19px;letter-spacing:-0.056px">oem14.inf</div><div class="t" style="left:1006.5px;top:254px;height:19px;line-height:19px;transform:scaleX(0.9189);transform-origin:0 50%">XL2420T_HDM...</div><div class="t" style="left:1106.5px;top:254px;height:19px;line-height:19px;letter-spacing:0.231px">monitor\bnq7f05</div><div class="t" style="left:1306.5px;top:254px;height:19px;line-height:19px;transform:scaleX(0.9118);transform-origin:0 50%">{4D36E96E-E325-11CE-BFC1-0800...</div>
<div class="cb" style="top:274px"><svg width="13" height="13" viewBox="0 0 13 13"><path d="M3.5 7.3L6 10.2 10 2.4" fill="none" stroke="#42527f" stroke-width="1.8"/></svg></div><div class="t" style="left:39px;top:273px;height:19px;line-height:19px;transform:scaleX(0.9386);transform-origin:0 50%">Razer DeathAdder V2</div><div class="t" style="left:306.5px;top:273px;height:19px;line-height:19px;letter-spacing:-0.186px">18/08/2020</div><div class="t" style="left:406.5px;top:273px;height:19px;line-height:19px;transform:scaleX(0.9014);transform-origin:0 50%">6.2.9200.16384</div><div class="t" style="left:506.5px;top:273px;height:19px;line-height:19px;transform:scaleX(0.919);transform-origin:0 50%">Razer Inc</div><div class="t" style="left:606.5px;top:273px;height:19px;line-height:19px;letter-spacing:0.046px">Mice and other pointing devices</div><div class="t" style="left:806.5px;top:273px;height:19px;line-height:19px;letter-spacing:0.034px">Mouse</div><div class="t" style="left:906.5px;top:273px;height:19px;line-height:19px;letter-spacing:-0.056px">oem19.inf</div><div class="t" style="left:1006.5px;top:273px;height:19px;line-height:19px;transform:scaleX(0.9083);transform-origin:0 50%">RzDev_Device....</div><div class="t" style="left:1106.5px;top:273px;height:19px;line-height:19px;letter-spacing:-0.109px">hid\vid_1532&amp;pid_0084&amp;mi_00</div><div class="t" style="left:1306.5px;top:273px;height:19px;line-height:19px;transform:scaleX(0.9149);transform-origin:0 50%">{4D36E96F-E325-11CE-BFC1-0800...</div>
<div class="cb" style="top:293px"><svg width="13" height="13" viewBox="0 0 13 13"><path d="M3.5 7.3L6 10.2 10 2.4" fill="none" stroke="#42527f" stroke-width="1.8"/></svg></div><div class="t" style="left:39px;top:292px;height:19px;line-height:19px;letter-spacing:-0.169px">Intel(R) Ethernet Connection (2) I219-V</div><div class="t" style="left:306.5px;top:292px;height:19px;line-height:19px;letter-spacing:-0.186px">27/09/2017</div><div class="t" style="left:406.5px;top:292px;height:19px;line-height:19px;transform:scaleX(0.9032);transform-origin:0 50%">12.17.8.7</div><div class="t" style="left:506.5px;top:292px;height:19px;line-height:19px;letter-spacing:0.102px">Intel</div><div class="t" style="left:606.5px;top:292px;height:19px;line-height:19px;letter-spacing:-0.053px">Network adapters</div><div class="t" style="left:806.5px;top:292px;height:19px;line-height:19px;letter-spacing:0.171px">Net</div><div class="t" style="left:906.5px;top:292px;height:19px;line-height:19px;letter-spacing:0.021px">oem8.inf</div><div class="t" style="left:1006.5px;top:292px;height:19px;line-height:19px;transform:scaleX(0.881);transform-origin:0 50%">E15B8.6.1.1</div><div class="t" style="left:1106.5px;top:292px;height:19px;line-height:19px;letter-spacing:-0.187px">pci\ven_8086&amp;dev_15b8</div><div class="t" style="left:1306.5px;top:292px;height:19px;line-height:19px;transform:scaleX(0.9178);transform-origin:0 50%">{4D36E972-E325-11CE-BFC1-0800...</div>
<div class="cb" style="top:312px"><svg width="13" height="13" viewBox="0 0 13 13"><path d="M3.5 7.3L6 10.2 10 2.4" fill="none" stroke="#42527f" stroke-width="1.8"/></svg></div><div class="t" style="left:39px;top:311px;height:19px;line-height:19px;letter-spacing:-0.268px">Шина PCI</div><div class="t" style="left:306.5px;top:311px;height:19px;line-height:19px;letter-spacing:-0.097px">11/05/2017</div><div class="t" style="left:406.5px;top:311px;height:19px;line-height:19px;transform:scaleX(0.9037);transform-origin:0 50%">5.0.4.43</div><div class="t" style="left:506.5px;top:311px;height:19px;line-height:19px;letter-spacing:0.102px">Intel</div><div class="t" style="left:606.5px;top:311px;height:19px;line-height:19px;letter-spacing:-0.345px">System devices</div><div class="t" style="left:806.5px;top:311px;height:19px;line-height:19px;transform:scaleX(0.9296);transform-origin:0 50%">System</div><div class="t" style="left:906.5px;top:311px;height:19px;line-height:19px;letter-spacing:0.021px">oem2.inf</div><div class="t" style="left:1006.5px;top:311px;height:19px;line-height:19px;letter-spacing:-0.256px">HCSwitch.NT</div><div class="t" style="left:1106.5px;top:311px;height:19px;line-height:19px;letter-spacing:-0.149px">*pnp0a08</div><div class="t" style="left:1306.5px;top:311px;height:19px;line-height:19px;transform:scaleX(0.9186);transform-origin:0 50%">{4D36E97D-E325-11CE-BFC1-0800...</div>
<div class="cb" style="top:331px"><svg width="13" height="13" viewBox="0 0 13 13"><path d="M3.5 7.3L6 10.2 10 2.4" fill="none" stroke="#42527f" stroke-width="1.8"/></svg></div><div class="t" style="left:39px;top:330px;height:19px;line-height:19px;letter-spacing:-0.297px">Intel(R) PCI Express Root Port #9 - A298</div><div class="t" style="left:306.5px;top:330px;height:19px;line-height:19px;letter-spacing:-0.186px">02/01/2018</div><div class="t" style="left:406.5px;top:330px;height:19px;line-height:19px;transform:scaleX(0.9032);transform-origin:0 50%">10.1.1.45</div><div class="t" style="left:506.5px;top:330px;height:19px;line-height:19px;transform:scaleX(0.8878);transform-origin:0 50%">INTEL</div><div class="t" style="left:606.5px;top:330px;height:19px;line-height:19px;letter-spacing:-0.345px">System devices</div><div class="t" style="left:806.5px;top:330px;height:19px;line-height:19px;transform:scaleX(0.9296);transform-origin:0 50%">System</div><div class="t" style="left:906.5px;top:330px;height:19px;line-height:19px;letter-spacing:0.021px">oem6.inf</div><div class="t" style="left:1006.5px;top:330px;height:19px;line-height:19px;transform:scaleX(0.8822);transform-origin:0 50%">Needs_PCI_DRV</div><div class="t" style="left:1106.5px;top:330px;height:19px;line-height:19px;letter-spacing:-0.235px">pci\ven_8086&amp;dev_a298</div><div class="t" style="left:1306.5px;top:330px;height:19px;line-height:19px;transform:scaleX(0.9186);transform-origin:0 50%">{4D36E97D-E325-11CE-BFC1-0800...</div>
<div class="cb" style="top:350px"><svg width="13" height="13" viewBox="0 0 13 13"><path d="M3.5 7.3L6 10.2 10 2.4" fill="none" stroke="#42527f" stroke-width="1.8"/></svg></div><div class="t" style="left:39px;top:349px;height:19px;line-height:19px;letter-spacing:-0.323px">Intel(R) PCI Express Root Port #20 - A2EA</div><div class="t" style="left:306.5px;top:349px;height:19px;line-height:19px;letter-spacing:-0.186px">02/01/2018</div><div class="t" style="left:406.5px;top:349px;height:19px;line-height:19px;transform:scaleX(0.9032);transform-origin:0 50%">10.1.1.45</div><div class="t" style="left:506.5px;top:349px;height:19px;line-height:19px;transform:scaleX(0.8878);transform-origin:0 50%">INTEL</div><div class="t" style="left:606.5px;top:349px;height:19px;line-height:19px;letter-spacing:-0.345px">System devices</div><div class="t" style="left:806.5px;top:349px;height:19px;line-height:19px;transform:scaleX(0.9296);transform-origin:0 50%">System</div><div class="t" style="left:906.5px;top:349px;height:19px;line-height:19px;letter-spacing:0.021px">oem6.inf</div><div class="t" style="left:1006.5px;top:349px;height:19px;line-height:19px;transform:scaleX(0.8822);transform-origin:0 50%">Needs_PCI_DRV</div><div class="t" style="left:1106.5px;top:349px;height:19px;line-height:19px;letter-spacing:-0.235px">pci\ven_8086&amp;dev_a2ea</div><div class="t" style="left:1306.5px;top:349px;height:19px;line-height:19px;transform:scaleX(0.9186);transform-origin:0 50%">{4D36E97D-E325-11CE-BFC1-0800...</div>
<div class="cb" style="top:369px"><svg width="13" height="13" viewBox="0 0 13 13"><path d="M3.5 7.3L6 10.2 10 2.4" fill="none" stroke="#42527f" stroke-width="1.8"/></svg></div><div class="t" style="left:39px;top:368px;height:19px;line-height:19px;letter-spacing:-0.347px">Intel(R) PCI Express Root Port #21 - A2EB</div><div class="t" style="left:306.5px;top:368px;height:19px;line-height:19px;letter-spacing:-0.186px">02/01/2018</div><div class="t" style="left:406.5px;top:368px;height:19px;line-height:19px;transform:scaleX(0.9032);transform-origin:0 50%">10.1.1.45</div><div class="t" style="left:506.5px;top:368px;height:19px;line-height:19px;transform:scaleX(0.8878);transform-origin:0 50%">INTEL</div><div class="t" style="left:606.5px;top:368px;height:19px;line-height:19px;letter-spacing:-0.345px">System devices</div><div class="t" style="left:806.5px;top:368px;height:19px;line-height:19px;transform:scaleX(0.9296);transform-origin:0 50%">System</div><div class="t" style="left:906.5px;top:368px;height:19px;line-height:19px;letter-spacing:0.021px">oem6.inf</div><div class="t" style="left:1006.5px;top:368px;height:19px;line-height:19px;transform:scaleX(0.8822);transform-origin:0 50%">Needs_PCI_DRV</div><div class="t" style="left:1106.5px;top:368px;height:19px;line-height:19px;letter-spacing:-0.187px">pci\ven_8086&amp;dev_a2eb</div><div class="t" style="left:1306.5px;top:368px;height:19px;line-height:19px;transform:scaleX(0.9186);transform-origin:0 50%">{4D36E97D-E325-11CE-BFC1-0800...</div>
<div class="cb" style="top:388px"><svg width="13" height="13" viewBox="0 0 13 13"><path d="M3.5 7.3L6 10.2 10 2.4" fill="none" stroke="#42527f" stroke-width="1.8"/></svg></div><div class="t" style="left:39px;top:387px;height:19px;line-height:19px;letter-spacing:-0.222px">Intel(R) Xeon(R) E3 - 1200/1500 v5/6th Gen Intel...</div><div class="t" style="left:306.5px;top:387px;height:19px;line-height:19px;letter-spacing:-0.186px">02/01/2018</div><div class="t" style="left:406.5px;top:387px;height:19px;line-height:19px;transform:scaleX(0.9032);transform-origin:0 50%">10.1.1.45</div><div class="t" style="left:506.5px;top:387px;height:19px;line-height:19px;transform:scaleX(0.8878);transform-origin:0 50%">INTEL</div><div class="t" style="left:606.5px;top:387px;height:19px;line-height:19px;letter-spacing:-0.345px">System devices</div><div class="t" style="left:806.5px;top:387px;height:19px;line-height:19px;transform:scaleX(0.9296);transform-origin:0 50%">System</div><div class="t" style="left:906.5px;top:387px;height:19px;line-height:19px;letter-spacing:-0.056px">oem10.inf</div><div class="t" style="left:1006.5px;top:387px;height:19px;line-height:19px;transform:scaleX(0.8822);transform-origin:0 50%">Needs_PCI_DRV</div><div class="t" style="left:1106.5px;top:387px;height:19px;line-height:19px;letter-spacing:-0.235px">pci\ven_8086&amp;dev_1901</div><div class="t" style="left:1306.5px;top:387px;height:19px;line-height:19px;transform:scaleX(0.9186);transform-origin:0 50%">{4D36E97D-E325-11CE-BFC1-0800...</div>
<div class="cb" style="top:407px"><svg width="13" height="13" viewBox="0 0 13 13"><path d="M3.5 7.3L6 10.2 10 2.4" fill="none" stroke="#42527f" stroke-width="1.8"/></svg></div><div class="t" style="left:39px;top:406px;height:19px;line-height:19px;letter-spacing:-0.251px">Intel(R) Host Bridge/DRAM Registers - 3EC2</div><div class="t" style="left:306.5px;top:406px;height:19px;line-height:19px;letter-spacing:-0.186px">18/07/1968</div><div class="t" style="left:406.5px;top:406px;height:19px;line-height:19px;transform:scaleX(0.9032);transform-origin:0 50%">10.1.14.4</div><div class="t" style="left:506.5px;top:406px;height:19px;line-height:19px;transform:scaleX(0.8878);transform-origin:0 50%">INTEL</div><div class="t" style="left:606.5px;top:406px;height:19px;line-height:19px;letter-spacing:-0.345px">System devices</div><div class="t" style="left:806.5px;top:406px;height:19px;line-height:19px;transform:scaleX(0.9296);transform-origin:0 50%">System</div><div class="t" style="left:906.5px;top:406px;height:19px;line-height:19px;letter-spacing:0.021px">oem9.inf</div><div class="t" style="left:1006.5px;top:406px;height:19px;line-height:19px;transform:scaleX(0.9127);transform-origin:0 50%">Needs_NO_DRV</div><div class="t" style="left:1106.5px;top:406px;height:19px;line-height:19px;letter-spacing:-0.202px">pci\ven_8086&amp;dev_3ec2</div><div class="t" style="left:1306.5px;top:406px;height:19px;line-height:19px;transform:scaleX(0.9186);transform-origin:0 50%">{4D36E97D-E325-11CE-BFC1-0800...</div>
<div class="cb" style="top:426px"><svg width="13" height="13" viewBox="0 0 13 13"><path d="M3.5 7.3L6 10.2 10 2.4" fill="none" stroke="#42527f" stroke-width="1.8"/></svg></div><div class="t" style="left:39px;top:425px;height:19px;line-height:19px;letter-spacing:-0.297px">Intel(R) PCI Express Root Port #1 - A290</div><div class="t" style="left:306.5px;top:425px;height:19px;line-height:19px;letter-spacing:-0.186px">02/01/2018</div><div class="t" style="left:406.5px;top:425px;height:19px;line-height:19px;transform:scaleX(0.9032);transform-origin:0 50%">10.1.1.45</div><div class="t" style="left:506.5px;top:425px;height:19px;line-height:19px;transform:scaleX(0.8878);transform-origin:0 50%">INTEL</div><div class="t" style="left:606.5px;top:425px;height:19px;line-height:19px;letter-spacing:-0.345px">System devices</div><div class="t" style="left:806.5px;top:425px;height:19px;line-height:19px;transform:scaleX(0.9296);transform-origin:0 50%">System</div><div class="t" style="left:906.5px;top:425px;height:19px;line-height:19px;letter-spacing:0.021px">oem6.inf</div><div class="t" style="left:1006.5px;top:425px;height:19px;line-height:19px;transform:scaleX(0.8822);transform-origin:0 50%">Needs_PCI_DRV</div><div class="t" style="left:1106.5px;top:425px;height:19px;line-height:19px;letter-spacing:-0.235px">pci\ven_8086&amp;dev_a290</div><div class="t" style="left:1306.5px;top:425px;height:19px;line-height:19px;transform:scaleX(0.9186);transform-origin:0 50%">{4D36E97D-E325-11CE-BFC1-0800...</div>
<div class="cb" style="top:445px"><svg width="13" height="13" viewBox="0 0 13 13"><path d="M3.5 7.3L6 10.2 10 2.4" fill="none" stroke="#42527f" stroke-width="1.8"/></svg></div><div class="t" style="left:39px;top:444px;height:19px;line-height:19px;letter-spacing:-0.221px">Intel(R) 300 Series Chipset Family LPC Controlle...</div><div class="t" style="left:306.5px;top:444px;height:19px;line-height:19px;letter-spacing:-0.186px">02/01/2018</div><div class="t" style="left:406.5px;top:444px;height:19px;line-height:19px;transform:scaleX(0.9032);transform-origin:0 50%">10.1.1.45</div><div class="t" style="left:506.5px;top:444px;height:19px;line-height:19px;transform:scaleX(0.8878);transform-origin:0 50%">INTEL</div><div class="t" style="left:606.5px;top:444px;height:19px;line-height:19px;letter-spacing:-0.345px">System devices</div><div class="t" style="left:806.5px;top:444px;height:19px;line-height:19px;transform:scaleX(0.9296);transform-origin:0 50%">System</div><div class="t" style="left:906.5px;top:444px;height:19px;line-height:19px;letter-spacing:0.021px">oem6.inf</div><div class="t" style="left:1006.5px;top:444px;height:19px;line-height:19px;transform:scaleX(0.9153);transform-origin:0 50%">Needs_MSISA...</div><div class="t" style="left:1106.5px;top:444px;height:19px;line-height:19px;letter-spacing:-0.202px">pci\ven_8086&amp;dev_a2c9</div><div class="t" style="left:1306.5px;top:444px;height:19px;line-height:19px;transform:scaleX(0.9186);transform-origin:0 50%">{4D36E97D-E325-11CE-BFC1-0800...</div>
<div class="cb" style="top:464px"><svg width="13" height="13" viewBox="0 0 13 13"><path d="M3.5 7.3L6 10.2 10 2.4" fill="none" stroke="#42527f" stroke-width="1.8"/></svg></div><div class="t" style="left:39px;top:463px;height:19px;line-height:19px;letter-spacing:-0.339px">Intel(R) PCI Express Root Port #17 - A2E7</div><div class="t" style="left:306.5px;top:463px;height:19px;line-height:19px;letter-spacing:-0.186px">02/01/2018</div><div class="t" style="left:406.5px;top:463px;height:19px;line-height:19px;transform:scaleX(0.9032);transform-origin:0 50%">10.1.1.45</div><div class="t" style="left:506.5px;top:463px;height:19px;line-height:19px;transform:scaleX(0.8878);transform-origin:0 50%">INTEL</div><div class="t" style="left:606.5px;top:463px;height:19px;line-height:19px;letter-spacing:-0.345px">System devices</div><div class="t" style="left:806.5px;top:463px;height:19px;line-height:19px;transform:scaleX(0.9296);transform-origin:0 50%">System</div><div class="t" style="left:906.5px;top:463px;height:19px;line-height:19px;letter-spacing:0.021px">oem6.inf</div><div class="t" style="left:1006.5px;top:463px;height:19px;line-height:19px;transform:scaleX(0.8822);transform-origin:0 50%">Needs_PCI_DRV</div><div class="t" style="left:1106.5px;top:463px;height:19px;line-height:19px;letter-spacing:-0.235px">pci\ven_8086&amp;dev_a2e7</div><div class="t" style="left:1306.5px;top:463px;height:19px;line-height:19px;transform:scaleX(0.9186);transform-origin:0 50%">{4D36E97D-E325-11CE-BFC1-0800...</div>
<div class="cb" style="top:483px"><svg width="13" height="13" viewBox="0 0 13 13"><path d="M3.5 7.3L6 10.2 10 2.4" fill="none" stroke="#42527f" stroke-width="1.8"/></svg></div><div class="t" style="left:39px;top:482px;height:19px;line-height:19px;letter-spacing:-0.297px">Intel(R) PCI Express Root Port #5 - A294</div><div class="t" style="left:306.5px;top:482px;height:19px;line-height:19px;letter-spacing:-0.186px">02/01/2018</div><div class="t" style="left:406.5px;top:482px;height:19px;line-height:19px;transform:scaleX(0.9032);transform-origin:0 50%">10.1.1.45</div><div class="t" style="left:506.5px;top:482px;height:19px;line-height:19px;transform:scaleX(0.8878);transform-origin:0 50%">INTEL</div><div class="t" style="left:606.5px;top:482px;height:19px;line-height:19px;letter-spacing:-0.345px">System devices</div><div class="t" style="left:806.5px;top:482px;height:19px;line-height:19px;transform:scaleX(0.9296);transform-origin:0 50%">System</div><div class="t" style="left:906.5px;top:482px;height:19px;line-height:19px;letter-spacing:0.021px">oem6.inf</div><div class="t" style="left:1006.5px;top:482px;height:19px;line-height:19px;transform:scaleX(0.8822);transform-origin:0 50%">Needs_PCI_DRV</div><div class="t" style="left:1106.5px;top:482px;height:19px;line-height:19px;letter-spacing:-0.235px">pci\ven_8086&amp;dev_a294</div><div class="t" style="left:1306.5px;top:482px;height:19px;line-height:19px;transform:scaleX(0.9186);transform-origin:0 50%">{4D36E97D-E325-11CE-BFC1-0800...</div>
<div class="cb" style="top:502px"><svg width="13" height="13" viewBox="0 0 13 13"><path d="M3.5 7.3L6 10.2 10 2.4" fill="none" stroke="#42527f" stroke-width="1.8"/></svg></div><div class="t" style="left:39px;top:501px;height:19px;line-height:19px;letter-spacing:-0.339px">Intel(R) PCI Express Root Port #19 - A2E9</div><div class="t" style="left:306.5px;top:501px;height:19px;line-height:19px;letter-spacing:-0.186px">02/01/2018</div><div class="t" style="left:406.5px;top:501px;height:19px;line-height:19px;transform:scaleX(0.9032);transform-origin:0 50%">10.1.1.45</div><div class="t" style="left:506.5px;top:501px;height:19px;line-height:19px;transform:scaleX(0.8878);transform-origin:0 50%">INTEL</div><div class="t" style="left:606.5px;top:501px;height:19px;line-height:19px;letter-spacing:-0.345px">System devices</div><div class="t" style="left:806.5px;top:501px;height:19px;line-height:19px;transform:scaleX(0.9296);transform-origin:0 50%">System</div><div class="t" style="left:906.5px;top:501px;height:19px;line-height:19px;letter-spacing:0.021px">oem6.inf</div><div class="t" style="left:1006.5px;top:501px;height:19px;line-height:19px;transform:scaleX(0.8822);transform-origin:0 50%">Needs_PCI_DRV</div><div class="t" style="left:1106.5px;top:501px;height:19px;line-height:19px;letter-spacing:-0.235px">pci\ven_8086&amp;dev_a2e9</div><div class="t" style="left:1306.5px;top:501px;height:19px;line-height:19px;transform:scaleX(0.9186);transform-origin:0 50%">{4D36E97D-E325-11CE-BFC1-0800...</div>
<div class="cb" style="top:521px"><svg width="13" height="13" viewBox="0 0 13 13"><path d="M3.5 7.3L6 10.2 10 2.4" fill="none" stroke="#42527f" stroke-width="1.8"/></svg></div><div class="t" style="left:39px;top:520px;height:19px;line-height:19px;letter-spacing:-0.118px">Intel(R) Management Engine Interface</div><div class="t" style="left:306.5px;top:520px;height:19px;line-height:19px;letter-spacing:-0.186px">03/01/2021</div><div class="t" style="left:406.5px;top:520px;height:19px;line-height:19px;transform:scaleX(0.9013);transform-origin:0 50%">2102.100.0.1044</div><div class="t" style="left:506.5px;top:520px;height:19px;line-height:19px;letter-spacing:0.102px">Intel</div><div class="t" style="left:606.5px;top:520px;height:19px;line-height:19px;letter-spacing:-0.345px">System devices</div><div class="t" style="left:806.5px;top:520px;height:19px;line-height:19px;transform:scaleX(0.9296);transform-origin:0 50%">System</div><div class="t" style="left:906.5px;top:520px;height:19px;line-height:19px;letter-spacing:0.021px">oem5.inf</div><div class="t" style="left:1006.5px;top:520px;height:19px;line-height:19px;transform:scaleX(0.85);transform-origin:0 50%">TEE_DDI_x64</div><div class="t" style="left:1106.5px;top:520px;height:19px;line-height:19px;letter-spacing:-0.187px">pci\ven_8086&amp;dev_a2ba</div><div class="t" style="left:1306.5px;top:520px;height:19px;line-height:19px;transform:scaleX(0.9186);transform-origin:0 50%">{4D36E97D-E325-11CE-BFC1-0800...</div>
<div class="cb" style="top:540px"><svg width="13" height="13" viewBox="0 0 13 13"><path d="M3.5 7.3L6 10.2 10 2.4" fill="none" stroke="#42527f" stroke-width="1.8"/></svg></div><div class="t" style="left:39px;top:539px;height:19px;line-height:19px;letter-spacing:-0.184px">Intel(R) PMC - A2A1</div><div class="t" style="left:306.5px;top:539px;height:19px;line-height:19px;letter-spacing:-0.186px">02/01/2018</div><div class="t" style="left:406.5px;top:539px;height:19px;line-height:19px;transform:scaleX(0.9032);transform-origin:0 50%">10.1.1.45</div><div class="t" style="left:506.5px;top:539px;height:19px;line-height:19px;transform:scaleX(0.8878);transform-origin:0 50%">INTEL</div><div class="t" style="left:606.5px;top:539px;height:19px;line-height:19px;letter-spacing:-0.345px">System devices</div><div class="t" style="left:806.5px;top:539px;height:19px;line-height:19px;transform:scaleX(0.9296);transform-origin:0 50%">System</div><div class="t" style="left:906.5px;top:539px;height:19px;line-height:19px;letter-spacing:0.021px">oem6.inf</div><div class="t" style="left:1006.5px;top:539px;height:19px;line-height:19px;transform:scaleX(0.9127);transform-origin:0 50%">Needs_NO_DRV</div><div class="t" style="left:1106.5px;top:539px;height:19px;line-height:19px;letter-spacing:-0.235px">pci\ven_8086&amp;dev_a2a1</div><div class="t" style="left:1306.5px;top:539px;height:19px;line-height:19px;transform:scaleX(0.9186);transform-origin:0 50%">{4D36E97D-E325-11CE-BFC1-0800...</div>
<div class="cb" style="top:559px"><svg width="13" height="13" viewBox="0 0 13 13"><path d="M3.5 7.3L6 10.2 10 2.4" fill="none" stroke="#42527f" stroke-width="1.8"/></svg></div><div class="t" style="left:39px;top:558px;height:19px;line-height:19px;letter-spacing:-0.31px">Intel(R) SMBUS - A2A3</div><div class="t" style="left:306.5px;top:558px;height:19px;line-height:19px;letter-spacing:-0.186px">02/01/2018</div><div class="t" style="left:406.5px;top:558px;height:19px;line-height:19px;transform:scaleX(0.9032);transform-origin:0 50%">10.1.1.45</div><div class="t" style="left:506.5px;top:558px;height:19px;line-height:19px;transform:scaleX(0.8878);transform-origin:0 50%">INTEL</div><div class="t" style="left:606.5px;top:558px;height:19px;line-height:19px;letter-spacing:-0.345px">System devices</div><div class="t" style="left:806.5px;top:558px;height:19px;line-height:19px;transform:scaleX(0.9296);transform-origin:0 50%">System</div><div class="t" style="left:906.5px;top:558px;height:19px;line-height:19px;letter-spacing:0.021px">oem6.inf</div><div class="t" style="left:1006.5px;top:558px;height:19px;line-height:19px;transform:scaleX(0.9127);transform-origin:0 50%">Needs_NO_DRV</div><div class="t" style="left:1106.5px;top:558px;height:19px;line-height:19px;letter-spacing:-0.235px">pci\ven_8086&amp;dev_a2a3</div><div class="t" style="left:1306.5px;top:558px;height:19px;line-height:19px;transform:scaleX(0.9186);transform-origin:0 50%">{4D36E97D-E325-11CE-BFC1-0800...</div>
<div class="cb" style="top:578px"><svg width="13" height="13" viewBox="0 0 13 13"><path d="M3.5 7.3L6 10.2 10 2.4" fill="none" stroke="#42527f" stroke-width="1.8"/></svg></div><div class="t" style="left:39px;top:577px;height:19px;line-height:19px;letter-spacing:-0.222px">Intel(R) Xeon(R) E3 - 1200/1500 v5/6th Gen Intel...</div><div class="t" style="left:306.5px;top:577px;height:19px;line-height:19px;letter-spacing:-0.186px">02/01/2018</div><div class="t" style="left:406.5px;top:577px;height:19px;line-height:19px;transform:scaleX(0.9032);transform-origin:0 50%">10.1.1.45</div><div class="t" style="left:506.5px;top:577px;height:19px;line-height:19px;transform:scaleX(0.8878);transform-origin:0 50%">INTEL</div><div class="t" style="left:606.5px;top:577px;height:19px;line-height:19px;letter-spacing:-0.345px">System devices</div><div class="t" style="left:806.5px;top:577px;height:19px;line-height:19px;transform:scaleX(0.9296);transform-origin:0 50%">System</div><div class="t" style="left:906.5px;top:577px;height:19px;line-height:19px;letter-spacing:0.021px">oem7.inf</div><div class="t" style="left:1006.5px;top:577px;height:19px;line-height:19px;transform:scaleX(0.9127);transform-origin:0 50%">Needs_NO_DRV</div><div class="t" style="left:1106.5px;top:577px;height:19px;line-height:19px;letter-spacing:-0.192px">pci\ven_8086&amp;dev_1911</div><div class="t" style="left:1306.5px;top:577px;height:19px;line-height:19px;transform:scaleX(0.9186);transform-origin:0 50%">{4D36E97D-E325-11CE-BFC1-0800...</div>
<div class="cb" style="top:597px"><svg width="13" height="13" viewBox="0 0 13 13"><path d="M3.5 7.3L6 10.2 10 2.4" fill="none" stroke="#42527f" stroke-width="1.8"/></svg></div><div class="t" style="left:39px;top:596px;height:19px;line-height:19px;transform:scaleX(0.9386);transform-origin:0 50%">Razer DeathAdder V2</div><div class="t" style="left:306.5px;top:596px;height:19px;line-height:19px;letter-spacing:-0.186px">18/08/2020</div><div class="t" style="left:406.5px;top:596px;height:19px;line-height:19px;transform:scaleX(0.9014);transform-origin:0 50%">6.2.9200.16384</div><div class="t" style="left:506.5px;top:596px;height:19px;line-height:19px;transform:scaleX(0.919);transform-origin:0 50%">Razer Inc</div><div class="t" style="left:606.5px;top:596px;height:19px;line-height:19px;letter-spacing:-0.154px">Human Interface Devices</div><div class="t" style="left:806.5px;top:596px;height:19px;line-height:19px;transform:scaleX(0.9117);transform-origin:0 50%">HIDClass</div><div class="t" style="left:906.5px;top:596px;height:19px;line-height:19px;letter-spacing:-0.056px">oem16.inf</div><div class="t" style="left:1006.5px;top:596px;height:19px;line-height:19px;transform:scaleX(0.9083);transform-origin:0 50%">RzDev_Device....</div><div class="t" style="left:1106.5px;top:596px;height:19px;line-height:19px;letter-spacing:-0.158px">usb\vid_1532&amp;pid_0084&amp;mi_01</div><div class="t" style="left:1306.5px;top:596px;height:19px;line-height:19px;letter-spacing:-0.309px">{745A17A0-74D3-11D0-B6FE-00A0...</div>
<div class="cb" style="top:616px"><svg width="13" height="13" viewBox="0 0 13 13"><path d="M3.5 7.3L6 10.2 10 2.4" fill="none" stroke="#42527f" stroke-width="1.8"/></svg></div><div class="t" style="left:39px;top:615px;height:19px;line-height:19px;letter-spacing:0.048px">HID-compliant consumer control device</div><div class="t" style="left:306.5px;top:615px;height:19px;line-height:19px;letter-spacing:-0.186px">18/08/2020</div><div class="t" style="left:406.5px;top:615px;height:19px;line-height:19px;transform:scaleX(0.9014);transform-origin:0 50%">6.2.9200.16384</div><div class="t" style="left:506.5px;top:615px;height:19px;line-height:19px;transform:scaleX(0.919);transform-origin:0 50%">Razer Inc</div><div class="t" style="left:606.5px;top:615px;height:19px;line-height:19px;letter-spacing:-0.154px">Human Interface Devices</div><div class="t" style="left:806.5px;top:615px;height:19px;line-height:19px;transform:scaleX(0.9117);transform-origin:0 50%">HIDClass</div><div class="t" style="left:906.5px;top:615px;height:19px;line-height:19px;letter-spacing:-0.056px">oem17.inf</div><div class="t" style="left:1006.5px;top:615px;height:19px;line-height:19px;transform:scaleX(0.9083);transform-origin:0 50%">RzDev_Device....</div><div class="t" style="left:1106.5px;top:615px;height:19px;line-height:19px;letter-spacing:-0.105px">rzvirtual\vid_1532&amp;pid_0084&amp;mi_...</div><div class="t" style="left:1306.5px;top:615px;height:19px;line-height:19px;letter-spacing:-0.309px">{745A17A0-74D3-11D0-B6FE-00A0...</div>
</div></div>
<div id="greenline" style="left:0;top:1008px;width:1920px;height:1px;background:#4c5a38"></div>
<div id="status">
 <div class="t" style="left:3.4px;letter-spacing:0.159px;top:5px;height:18px;line-height:18px;font-size:12px">Для созданий резервных копий драйверов, выделите нужные драйвера из списка и нажмите кнопку BackUp!</div>
 <div style="left:1902px;top:6px;width:2px;height:30px;background:linear-gradient(90deg,#a7a7a7 0,#a7a7a7 1px,#fff 1px)"></div>
 <svg style="position:absolute;left:1907px;top:27px" width="12" height="12" viewBox="0 0 12 12"><g fill="#fff"><rect x="10" y="2" width="2" height="2"/><rect x="6" y="6" width="2" height="2"/><rect x="10" y="6" width="2" height="2"/><rect x="2" y="10" width="2" height="2"/><rect x="6" y="10" width="2" height="2"/><rect x="10" y="10" width="2" height="2"/></g><g fill="#a9a9a9"><rect x="9" y="1" width="2" height="2"/><rect x="5" y="5" width="2" height="2"/><rect x="9" y="5" width="2" height="2"/><rect x="1" y="9" width="2" height="2"/><rect x="5" y="9" width="2" height="2"/><rect x="9" y="9" width="2" height="2"/></g></svg>
</div>
<div id="task">
 <div style="left:8px;top:-5px;width:37px;height:37px;border-radius:50%;border:1px solid #3c5a78;background:radial-gradient(circle at 50% 40%,#c9dcea 0,#7fa6c4 45%,#4d7ea6 100%)"><div style="left:10px;top:6px;width:7px;height:9px;background:#e8682c;border-radius:3px 0 0 0;transform:skewX(-8deg)"></div><div style="left:20px;top:7px;width:9px;height:9px;background:#7cb83a;border-radius:0 3px 0 0;transform:skewX(-8deg)"></div></div>
 <div style="left:77px;top:5px;width:8px;height:4px;border-radius:4px 4px 0 0;background:#2b3344"></div>
 <div class="tb" style="left:105px;width:160px"></div>
 <div class="tb" style="left:267px;width:321px"></div>
 <div class="tb" style="left:427px;width:161px;border-left:0;border-radius:0 2px 0 0"></div>
 <div class="tb" style="left:589px;width:160px;background:linear-gradient(90deg,#f5f7fa,#e6eaf0)"></div>
 <div style="left:1905px;top:1px;width:15px;height:7px;border-left:1px solid #39424f;background:linear-gradient(135deg,#5f6b7d,#a8b3c4)"></div>
</div>
</body></html>
